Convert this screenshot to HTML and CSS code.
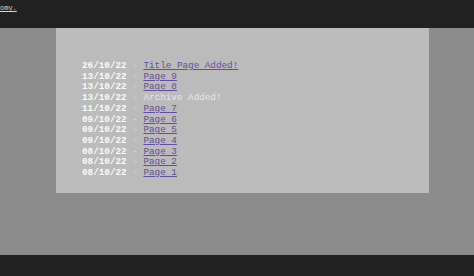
FILE: index.html
```html
<!DOCTYPE html>
<html lang="en">
<head>
    <meta charset="UTF-8">
    <title>Updates</title>
    <link rel="stylesheet" href="styles.css">
</head>
<body>

    <!-- top bar -->
    <div class="topbar">
        <a href="#" class="crumb">omy.</a>
    </div>

    <!-- content -->
    <div class="stage">
        <div class="panel">
            <ul class="log">
                <li><b>26/10/22</b> <span class="dash">-</span> <a href="#">Title Page Added!</a></li>
                <li><b>13/10/22</b> <span class="dash">-</span> <a href="#">Page 9</a></li>
                <li><b>13/10/22</b> <span class="dash">-</span> <a href="#">Page 8</a></li>
                <li><b>13/10/22</b> <span class="dash">-</span> <span class="note">Archive Added!</span></li>
                <li><b>11/10/22</b> <span class="dash">-</span> <a href="#">Page 7</a></li>
                <li><b>09/10/22</b> <span class="dash">-</span> <a href="#">Page 6</a></li>
                <li><b>09/10/22</b> <span class="dash">-</span> <a href="#">Page 5</a></li>
                <li><b>09/10/22</b> <span class="dash">-</span> <a href="#">Page 4</a></li>
                <li><b>08/10/22</b> <span class="dash">-</span> <a href="#">Page 3</a></li>
                <li><b>08/10/22</b> <span class="dash">-</span> <a href="#">Page 2</a></li>
                <li><b>08/10/22</b> <span class="dash">-</span> <a href="#">Page 1</a></li>
            </ul>
        </div>
    </div>

    <div class="bottombar"></div>

</body>
</html>
```

FILE: styles.css
```css
body {
    margin: 0;
    height: 276px;
    display: flex;
    flex-direction: column;
    background: #212121;
    font-family: 'Liberation Mono', 'Courier New', monospace;
}
.topbar {
    height: 28px;
    flex-shrink: 0;
    background: #212121;
    padding: 4px 0 0 0;
    box-sizing: border-box;
}
.crumb {
    color: #d8d8d8;
    font-size: 7px;
    display: block;
}
.stage {
    height: 227px;
    flex-shrink: 0;
    background: #8c8c8c;
    padding-left: 56px;
    box-sizing: border-box;
}
.panel {
    width: 373px;
    height: 165px;
    background: #bbbbbb;
    padding: 33px 0 0 26px;
    box-sizing: border-box;
}
.log {
    list-style: none;
    margin: 0;
    padding: 0;
    font-size: 9.3px;
    line-height: 10.7px;
}
.log b {
    color: #fafafa;
}
.dash {
    color: #d6d6d6;
}
.note {
    color: #e6e6e6;
}
.log a {
    color: #634f9a;
}
.bottombar {
    flex: 1;
    background: #212121;
}
```
